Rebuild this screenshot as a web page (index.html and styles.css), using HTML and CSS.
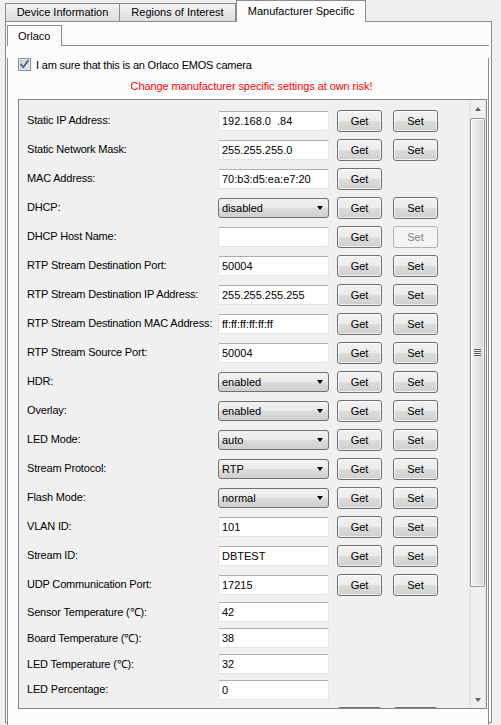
FILE: index.html
```html
<!DOCTYPE html>
<html>
<head>
    <link rel="stylesheet" href="styles.css">
</head>
<body>
    <div class="tab-bar">
        <div class="tab tab-device">Device Information</div>
        <div class="tab tab-regions">Regions of Interest</div>
        <div class="tab tab-manufacturer active">Manufacturer Specific</div>
    </div>

    <div class="pane outer-pane">
        <div class="tab-bar sub-tab-bar">
            <div class="tab sub-tab active">Orlaco</div>
        </div>

        <div class="pane inner-pane">
            <label class="confirm">
                <span class="checkbox">
                    <svg width="13" height="13" viewBox="0 0 13 13">
                        <defs>
                            <linearGradient id="cb-fill" x1="0" y1="0" x2="1" y2="1">
                                <stop offset="0" stop-color="#cbcfd5"/>
                                <stop offset="1" stop-color="#f6f6f6"/>
                            </linearGradient>
                        </defs>
                        <rect x="0.5" y="0.5" width="12" height="12" fill="#fff" stroke="#8e8f8f"/>
                        <rect x="2" y="2" width="9" height="9" fill="url(#cb-fill)" stroke="#b0b5bd" stroke-width="0.6"/>
                        <path d="M3 6.5 L5.3 9.3 L10 2.8" fill="none" stroke="#4a5f97" stroke-width="1.8" stroke-linecap="round" stroke-linejoin="round"/>
                    </svg>
                </span>
                I am sure that this is an Orlaco EMOS camera
            </label>
            <div class="warning">Change manufacturer specific settings at own risk!</div>

            <div class="scroll-area">
                <div class="viewport">
                    <div class="settings-list">
                        <div class="row">
                            <span class="row-label">Static IP Address:</span>
                            <div class="text-input">192.168.0 &nbsp;.84</div>
                            <button class="win-button get">Get</button>
                            <button class="win-button set">Set</button>
                        </div>
                        <div class="row">
                            <span class="row-label">Static Network Mask:</span>
                            <div class="text-input">255.255.255.0</div>
                            <button class="win-button get">Get</button>
                            <button class="win-button set">Set</button>
                        </div>
                        <div class="row">
                            <span class="row-label">MAC Address:</span>
                            <div class="text-input">70:b3:d5:ea:e7:20</div>
                            <button class="win-button get">Get</button>
                        </div>
                        <div class="row">
                            <span class="row-label">DHCP:</span>
                            <div class="combo">disabled<span class="combo-arrow"></span></div>
                            <button class="win-button get">Get</button>
                            <button class="win-button set">Set</button>
                        </div>
                        <div class="row">
                            <span class="row-label">DHCP Host Name:</span>
                            <div class="text-input"></div>
                            <button class="win-button get">Get</button>
                            <button class="win-button set" disabled>Set</button>
                        </div>
                        <div class="row">
                            <span class="row-label">RTP Stream Destination Port:</span>
                            <div class="text-input">50004</div>
                            <button class="win-button get">Get</button>
                            <button class="win-button set">Set</button>
                        </div>
                        <div class="row">
                            <span class="row-label">RTP Stream Destination IP Address:</span>
                            <div class="text-input">255.255.255.255</div>
                            <button class="win-button get">Get</button>
                            <button class="win-button set">Set</button>
                        </div>
                        <div class="row">
                            <span class="row-label">RTP Stream Destination MAC Address:</span>
                            <div class="text-input">ff:ff:ff:ff:ff:ff</div>
                            <button class="win-button get">Get</button>
                            <button class="win-button set">Set</button>
                        </div>
                        <div class="row">
                            <span class="row-label">RTP Stream Source Port:</span>
                            <div class="text-input">50004</div>
                            <button class="win-button get">Get</button>
                            <button class="win-button set">Set</button>
                        </div>
                        <div class="row">
                            <span class="row-label">HDR:</span>
                            <div class="combo">enabled<span class="combo-arrow"></span></div>
                            <button class="win-button get">Get</button>
                            <button class="win-button set">Set</button>
                        </div>
                        <div class="row">
                            <span class="row-label">Overlay:</span>
                            <div class="combo">enabled<span class="combo-arrow"></span></div>
                            <button class="win-button get">Get</button>
                            <button class="win-button set">Set</button>
                        </div>
                        <div class="row">
                            <span class="row-label">LED Mode:</span>
                            <div class="combo">auto<span class="combo-arrow"></span></div>
                            <button class="win-button get">Get</button>
                            <button class="win-button set">Set</button>
                        </div>
                        <div class="row">
                            <span class="row-label">Stream Protocol:</span>
                            <div class="combo">RTP<span class="combo-arrow"></span></div>
                            <button class="win-button get">Get</button>
                            <button class="win-button set">Set</button>
                        </div>
                        <div class="row">
                            <span class="row-label">Flash Mode:</span>
                            <div class="combo">normal<span class="combo-arrow"></span></div>
                            <button class="win-button get">Get</button>
                            <button class="win-button set">Set</button>
                        </div>
                        <div class="row">
                            <span class="row-label">VLAN ID:</span>
                            <div class="text-input">101</div>
                            <button class="win-button get">Get</button>
                            <button class="win-button set">Set</button>
                        </div>
                        <div class="row">
                            <span class="row-label">Stream ID:</span>
                            <div class="text-input">DBTEST</div>
                            <button class="win-button get">Get</button>
                            <button class="win-button set">Set</button>
                        </div>
                        <div class="row">
                            <span class="row-label">UDP Communication Port:</span>
                            <div class="text-input">17215</div>
                            <button class="win-button get">Get</button>
                            <button class="win-button set">Set</button>
                        </div>
                        <div class="row short">
                            <span class="row-label">Sensor Temperature (&#8451;):</span>
                            <div class="text-input">42</div>
                        </div>
                        <div class="row short">
                            <span class="row-label">Board Temperature (&#8451;):</span>
                            <div class="text-input">38</div>
                        </div>
                        <div class="row short">
                            <span class="row-label">LED Temperature (&#8451;):</span>
                            <div class="text-input">32</div>
                        </div>
                        <div class="row short">
                            <span class="row-label">LED Percentage:</span>
                            <div class="text-input">0</div>
                        </div>
                        <!-- next row is scrolled out of view, only the button tops peek in -->
                        <div class="row">
                            <span class="row-label"></span>
                            <div class="text-input hidden-input"></div>
                            <button class="win-button get"></button>
                            <button class="win-button set"></button>
                        </div>
                    </div>
                </div>

                <div class="vscroll">
                    <div class="scroll-arrow up"></div>
                    <div class="scroll-track">
                        <div class="scroll-thumb"><span class="grip"></span></div>
                    </div>
                    <div class="scroll-arrow down"></div>
                </div>
            </div>
        </div>
    </div>
</body>
</html>
```

FILE: styles.css
```css
* {
    box-sizing: border-box;
}
body {
    margin: 0;
    width: 501px;
    height: 725px;
    overflow: hidden;
    font-family: "Liberation Sans", Arial, sans-serif;
    font-size: 11px;
    color: #000;
    background-color: #f0f0f0;
}

/* tabs: the bar draws the pane's top edge, the active tab leaves it open */
.tab-bar {
    display: flex;
    align-items: flex-end;
    height: 22px;
    margin-left: 5px;
    width: 487px;
}
.tab-bar::after {
    content: "";
    flex: 1;
    border-bottom: 1px solid #898c95;
}
.tab {
    height: 19px;
    border: 1px solid #898c95;
    background: linear-gradient(#f3f3f3, #e8e8e8 50%, #dedede);
    display: flex;
    align-items: center;
    justify-content: center;
    white-space: nowrap;
    padding-bottom: 1px;
}
.tab-device {
    width: 115px;
}
.tab-regions {
    width: 116px;
    border-left: none;
}
.tab-manufacturer {
    width: 130px;
}
.tab.active {
    height: 22px;
    border-bottom: none;
    background: #fcfcfc;
    padding-bottom: 2px;
}
.pane {
    border: 1px solid #898c95;
    border-top: none;
    background-color: #fcfcfc;
}
.outer-pane {
    margin-left: 5px;
    width: 487px;
    height: 701px;
    padding: 3px 2px 0 1px;
}
.sub-tab-bar {
    height: 21px;
    margin-left: 0;
    width: 482px;
}
.sub-tab {
    width: 55px;
    justify-content: flex-start;
    padding-left: 10px;
}
.sub-tab.active {
    height: 21px;
    padding-bottom: 1px;
}
.inner-pane {
    width: 482px;
    height: 674px;
    padding: 0 1px 0 10px;
}

/* header */
.confirm {
    display: flex;
    align-items: center;
    gap: 5px;
    height: 13px;
    margin-top: 12px;
    letter-spacing: -0.2px;
}
.checkbox {
    width: 13px;
    height: 13px;
    display: block;
}
.checkbox svg {
    display: block;
}
.warning {
    margin-top: 9px;
    height: 13px;
    line-height: 13px;
    text-align: center;
    padding-right: 2px;
    color: #ff0000;
    letter-spacing: -0.08px;
}

/* scroll area */
.scroll-area {
    margin-top: 6px;
    width: 469px;
    height: 610px;
    border: 1px solid #828790;
    background-color: #f0f0f0;
    display: flex;
}
.viewport {
    flex: 1;
    overflow: hidden;
    padding: 9px 0 0 8px;
}
.settings-list {
    display: flex;
    flex-direction: column;
    gap: 6px;
}
.row {
    display: flex;
    align-items: center;
    height: 23px;
}
.row.short {
    height: 20px;
}
.row-label {
    width: 191px;
    white-space: nowrap;
    letter-spacing: -0.18px;
    padding-bottom: 2px;
}
.text-input,
.combo {
    width: 111px;
    height: 20px;
    line-height: 18px;
    padding-left: 3px;
    white-space: nowrap;
}
.text-input {
    background-color: #fff;
    border: 1px solid #e2e3ea;
    border-top-color: #abadb3;
    border-radius: 2px;
}
.hidden-input {
    visibility: hidden;
}
.combo {
    display: flex;
    align-items: center;
    justify-content: space-between;
    padding-right: 5px;
    border: 1px solid #707070;
    border-radius: 3px;
    background: linear-gradient(#f2f2f2, #ebebeb 50%, #dddddd 50%, #cfcfcf);
}
.combo-arrow {
    width: 0;
    height: 0;
    border-left: 3.5px solid transparent;
    border-right: 3.5px solid transparent;
    border-top: 4px solid #000;
}
.win-button {
    height: 22px;
    width: 45px;
    padding: 0;
    font: inherit;
    color: #000;
    border: 1px solid #707070;
    border-radius: 3px;
    background: linear-gradient(#f2f2f2, #ebebeb 50%, #dddddd 50%, #cfcfcf);
    box-shadow: inset 0 0 0 1px rgba(255, 255, 255, 0.7);
}
.win-button.get {
    margin-left: 8px;
}
.win-button.set {
    margin-left: 11px;
}
.win-button:disabled {
    border-color: #adb2b5;
    background: #f4f4f4;
    color: #838383;
    box-shadow: none;
}

/* scrollbar */
.vscroll {
    width: 17px;
    display: flex;
    flex-direction: column;
    background: linear-gradient(to right, #e3e3e3, #efefef 20%, #f2f2f2 80%, #e8e8e8);
}
.scroll-arrow {
    height: 17px;
    display: flex;
    align-items: center;
    justify-content: center;
}
.scroll-arrow::after {
    content: "";
    border-left: 3.5px solid transparent;
    border-right: 3.5px solid transparent;
}
.scroll-arrow.up::after {
    border-bottom: 4px solid #606060;
}
.scroll-arrow.down::after {
    border-top: 4px solid #606060;
}
.scroll-track {
    flex: 1;
    padding: 1px 1px 0 1px;
}
.scroll-thumb {
    height: 469px;
    border: 1px solid #959595;
    border-radius: 2px;
    background: linear-gradient(to right, #f4f4f4, #e8e8e8 45%, #d6d6d6);
    box-shadow: inset 0 0 0 1px rgba(255, 255, 255, 0.8);
    display: flex;
    align-items: center;
    justify-content: center;
}
.grip {
    width: 7px;
    height: 7px;
    background: repeating-linear-gradient(#5f5f5f 0 1px, #f0f0f0 1px 2px);
}
```
